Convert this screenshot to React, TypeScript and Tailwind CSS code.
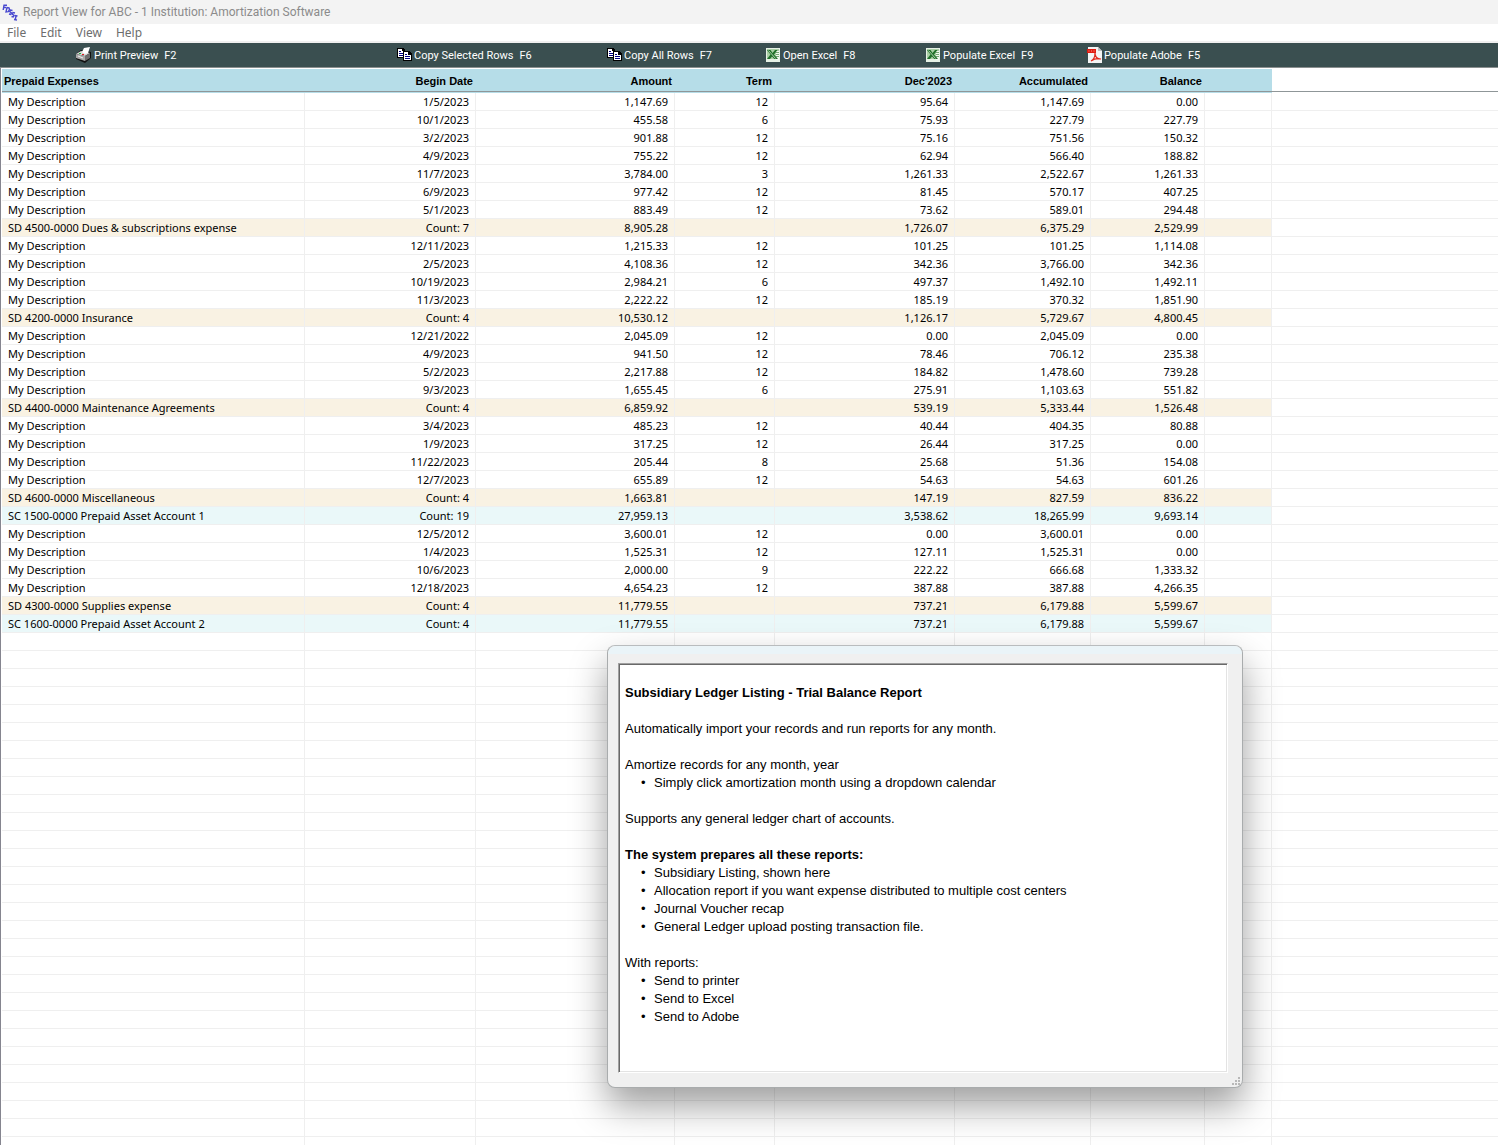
import type { ReactNode } from 'react';

type Row = string[];

const columns = ['Begin Date', 'Amount', 'Term', "Dec'2023", 'Accumulated', 'Balance'];

const rows: Row[] = [
  ['My Description', '1/5/2023', '1,147.69', '12', '95.64', '1,147.69', '0.00'],
  ['My Description', '10/1/2023', '455.58', '6', '75.93', '227.79', '227.79'],
  ['My Description', '3/2/2023', '901.88', '12', '75.16', '751.56', '150.32'],
  ['My Description', '4/9/2023', '755.22', '12', '62.94', '566.40', '188.82'],
  ['My Description', '11/7/2023', '3,784.00', '3', '1,261.33', '2,522.67', '1,261.33'],
  ['My Description', '6/9/2023', '977.42', '12', '81.45', '570.17', '407.25'],
  ['My Description', '5/1/2023', '883.49', '12', '73.62', '589.01', '294.48'],
  ['SD 4500-0000 Dues & subscriptions expense', 'Count: 7', '8,905.28', '', '1,726.07', '6,375.29', '2,529.99'],
  ['My Description', '12/11/2023', '1,215.33', '12', '101.25', '101.25', '1,114.08'],
  ['My Description', '2/5/2023', '4,108.36', '12', '342.36', '3,766.00', '342.36'],
  ['My Description', '10/19/2023', '2,984.21', '6', '497.37', '1,492.10', '1,492.11'],
  ['My Description', '11/3/2023', '2,222.22', '12', '185.19', '370.32', '1,851.90'],
  ['SD 4200-0000 Insurance', 'Count: 4', '10,530.12', '', '1,126.17', '5,729.67', '4,800.45'],
  ['My Description', '12/21/2022', '2,045.09', '12', '0.00', '2,045.09', '0.00'],
  ['My Description', '4/9/2023', '941.50', '12', '78.46', '706.12', '235.38'],
  ['My Description', '5/2/2023', '2,217.88', '12', '184.82', '1,478.60', '739.28'],
  ['My Description', '9/3/2023', '1,655.45', '6', '275.91', '1,103.63', '551.82'],
  ['SD 4400-0000 Maintenance Agreements', 'Count: 4', '6,859.92', '', '539.19', '5,333.44', '1,526.48'],
  ['My Description', '3/4/2023', '485.23', '12', '40.44', '404.35', '80.88'],
  ['My Description', '1/9/2023', '317.25', '12', '26.44', '317.25', '0.00'],
  ['My Description', '11/22/2023', '205.44', '8', '25.68', '51.36', '154.08'],
  ['My Description', '12/7/2023', '655.89', '12', '54.63', '54.63', '601.26'],
  ['SD 4600-0000 Miscellaneous', 'Count: 4', '1,663.81', '', '147.19', '827.59', '836.22'],
  ['SC 1500-0000 Prepaid Asset Account 1', 'Count: 19', '27,959.13', '', '3,538.62', '18,265.99', '9,693.14'],
  ['My Description', '12/5/2012', '3,600.01', '12', '0.00', '3,600.01', '0.00'],
  ['My Description', '1/4/2023', '1,525.31', '12', '127.11', '1,525.31', '0.00'],
  ['My Description', '10/6/2023', '2,000.00', '9', '222.22', '666.68', '1,333.32'],
  ['My Description', '12/18/2023', '4,654.23', '12', '387.88', '387.88', '4,266.35'],
  ['SD 4300-0000 Supplies expense', 'Count: 4', '11,779.55', '', '737.21', '6,179.88', '5,599.67'],
  ['SC 1600-0000 Prepaid Asset Account 2', 'Count: 4', '11,779.55', '', '737.21', '6,179.88', '5,599.67'],
];

// blank grid lines below the data
const emptyRows: Row[] = Array.from({ length: 40 }, () => ['', '', '', '', '', '', '']);

function rowColor(name: string) {
  if (name.startsWith('SD')) return 'bg-[#f9f2e3]';
  if (name.startsWith('SC')) return 'bg-[#eaf8f9]';
  return '';
}

function AppIcon() {
  return (
    <svg width="16" height="17" viewBox="0 0 16 17" fill="none" stroke="#4a4ad0" strokeWidth="1.4" aria-hidden="true">
      <path d="M1.200 6L2 1.200h3M1.500 3.500h2.500" />
      <path d="M4 8l1-4.500 2 .3.500 1.700-1.200 2.200z" />
      <path d="M10.500 6.500L8.500 6l-.8 1.500L9.500 9 8.700 10.500 7 10" />
      <path d="M13 9l-2-.5-.8 1.500 1.800 1.500-.8 1.500-1.700-.5" />
      <path d="M12.500 11.500l3 .5M14 12l-.8 4M12 15.500l3 .5" />
    </svg>
  );
}

function PrinterIcon() {
  return (
    <svg width="16" height="16" viewBox="0 0 16 16" aria-hidden="true">
      <path d="M0 7l5-4 10 2v6l-6 5-9-4z" fill="#111" />
      <path d="M0 7l5-3 9 2-5 3z" fill="#d8d8d8" />
      <path d="M0 7l9 2v5l-9-3z" fill="#a8a8a8" />
      <path d="M9 9l5-3v5l-5 3z" fill="#6e6e6e" />
      <path d="M6 5l2-4 6-1-2 6-3 1z" fill="#fff" />
      <path d="M2 9l5 2" stroke="#eee" />
      <path d="M3 6h2v1H3z" fill="#1fae3a" />
      <path d="M6 7h2v1H6z" fill="#e02020" />
    </svg>
  );
}

function CopyIcon() {
  return (
    <svg width="15" height="14" viewBox="0 0 15 14" shapeRendering="crispEdges" aria-hidden="true">
      <path d="M0 0h6l2 2v8H0z" fill="#000" />
      <path d="M1 1h4v2h2v6H1z" fill="#fff" />
      <path d="M2 3h2v1H2zM2 5h4v1H2zM2 7h4v1H2z" fill="#000080" />
      <path d="M6 3h6l3 3v7H6z" fill="#000" />
      <path d="M7 4h4v3h3v5H7z" fill="#fff" />
      <path d="M8 6h2v1H8zM8 8h5v1H8zM8 10h5v1H8z" fill="#000080" />
    </svg>
  );
}

function ExcelIcon() {
  return (
    <svg width="15" height="14" viewBox="0 0 15 14" aria-hidden="true">
      <path d="M0 0h14v14H0z" fill="#e6f1e5" />
      <path d="M1 1h12v10H1z" fill="#a9cfa5" />
      <path d="M10 3h3v9h-3z" fill="#f3f8f2" />
      <path d="M10 4.500h3M10 6.500h3M10 8.500h3" stroke="#76a974" />
      <path d="M1 2h3.500L6.500 5 9 2h2.500L8 6.500l4 4.500H8.500L6 8.500 4 11H1l3.500-4.500z" fill="#20702a" />
      <path d="M2.500 2.500l7 8" stroke="#cfe8cd" strokeWidth=".8" />
    </svg>
  );
}

function AdobeIcon() {
  return (
    <svg width="15" height="16" viewBox="0 0 15 16" aria-hidden="true">
      <path d="M1 0h10l4 4v12H1z" fill="#f4f4f4" />
      <path d="M11 0v4h4z" fill="#bdbdbd" />
      <path d="M0 2h9v4H0z" fill="#e01b10" />
      <path d="M1.500 4h1M4 4h1M6.500 4h1" stroke="#ff9a8c" />
      <path d="M4 14c2-1 4-4 4-8 0 4 2 6 6 6-4-1-7 0-10 2z" fill="none" stroke="#e0281c" strokeWidth="1.200" />
    </svg>
  );
}

function ToolButton({ icon, label, hotkey, className }: { icon: ReactNode; label: string; hotkey: string; className: string }) {
  return (
    <div className={className}>
      <button type="button" className="flex h-6 items-center gap-0.5 whitespace-nowrap">
        {icon}
        <span className="pt-0.5">{label}</span>
        <span className="pt-0.5 pl-1">{hotkey}</span>
      </button>
    </div>
  );
}

function Bullets({ items }: { items: string[] }) {
  return (
    <ul>
      {items.map((item) => (
        <li key={item} className="flex pl-4">
          <span className="w-[13px]">•</span>
          {item}
        </li>
      ))}
    </ul>
  );
}

function InfoWindow() {
  return (
    <section
      aria-label="Report information"
      className="absolute top-[645px] left-[607px] w-[636px] rounded-lg border border-[#a9acad] border-t-[#b9bcbe] bg-[#f0f0f0] shadow-[0_18px_36px_rgba(0,0,0,0.38)]"
    >
      <div className="h-2 rounded-t-lg bg-[#eaf4f8]" />
      <div className="pt-[9px] pr-3.5 pb-3.5 pl-2.5">
        <div className="h-[410px] border border-t-[#a0a0a0] border-r-white border-b-white border-l-[#a0a0a0] bg-white px-1.5 pt-5 text-[13px] leading-[18px] shadow-[inset_1px_1px_0_#696969,inset_-1px_-1px_0_#e3e3e3]">
          <h2 className="font-bold">Subsidiary Ledger Listing - Trial Balance Report</h2>
          <p className="mt-[18px]">Automatically import your records and run reports for any month.</p>
          <p className="mt-[18px]">Amortize records for any month, year</p>
          <Bullets items={['Simply click amortization month using a dropdown calendar']} />
          <p className="mt-[18px]">Supports any general ledger chart of accounts.</p>
          <h3 className="mt-[18px] font-bold">The system prepares all these reports:</h3>
          <Bullets
            items={[
              'Subsidiary Listing, shown here',
              'Allocation report if you want expense distributed to multiple cost centers',
              'Journal Voucher recap',
              'General Ledger upload posting transaction file.',
            ]}
          />
          <p className="mt-[18px]">With reports:</p>
          <Bullets items={['Send to printer', 'Send to Excel', 'Send to Adobe']} />
        </div>
      </div>
      {/* Resize grip */}
      <svg className="absolute right-0.5 bottom-0.5" width="8" height="8" viewBox="0 0 8 8" fill="#b8b8b8" aria-hidden="true">
        <path d="M6 0h2v2H6zM3 3h2v2H3zM6 3h2v2H6zM0 6h2v2H0zM3 6h2v2H3zM6 6h2v2H6z" />
      </svg>
    </section>
  );
}

export default function App() {
  return (
    <div className="relative flex h-screen flex-col overflow-hidden bg-white font-['Liberation_Sans',Arial,sans-serif] text-black">
      {/* Title bar */}
      <header className="flex h-6 shrink-0 items-center gap-[5px] bg-[#f3f3f3] pl-0.5 font-[Roboto,sans-serif] text-[12px] text-[#8b8b8b]">
        <AppIcon />
        <h1>Report View for ABC - 1 Institution: Amortization Software</h1>
      </header>

      {/* Menu */}
      <nav className="flex h-[19px] shrink-0 items-center gap-3.5 border-b-2 border-[#f0f0f0] pl-[7px] font-['Noto_Sans',sans-serif] text-[12px] text-[#6d6d6d]">
        <button type="button">File</button>
        <button type="button">Edit</button>
        <button type="button">View</button>
        <button type="button">Help</button>
      </nav>

      {/* Toolbar */}
      <div className="flex h-[25px] shrink-0 border-b border-[#8a8f8f] bg-[#3a4f50] pl-[76px] font-[Roboto,sans-serif] text-[11px] text-white">
        <ToolButton className="w-[321px]" icon={<PrinterIcon />} label="Print Preview" hotkey="F2" />
        <ToolButton className="w-[210px]" icon={<CopyIcon />} label="Copy Selected Rows" hotkey="F6" />
        <ToolButton className="w-[159px]" icon={<CopyIcon />} label="Copy All Rows" hotkey="F7" />
        <ToolButton className="w-[160px]" icon={<ExcelIcon />} label="Open Excel" hotkey="F8" />
        <ToolButton className="w-[161px]" icon={<ExcelIcon />} label="Populate Excel" hotkey="F9" />
        <ToolButton className="w-[120px]" icon={<AdobeIcon />} label="Populate Adobe" hotkey="F5" />
      </div>

      {/* Report grid */}
      <main className="min-h-0 flex-1 overflow-hidden border-l border-[#85858f] pt-px pl-px">
        <table className="w-full table-fixed border-separate border-spacing-0 text-[11px] leading-[17px]">
          <colgroup>
            <col className="w-[303px]" />
            <col className="w-[171px]" />
            <col className="w-[199px]" />
            <col className="w-[100px]" />
            <col className="w-[180px]" />
            <col className="w-[136px]" />
            <col className="w-[114px]" />
            <col className="w-[67px]" />
            <col />
          </colgroup>
          <thead>
            <tr className="h-6 text-right">
              <th className="border-b border-[#b6dde8] bg-[#b6dde8] p-0 pt-0.5 pl-0.5 text-left shadow-[inset_0_-1px_0_#8f9698]">Prepaid Expenses</th>
              {columns.map((name) => (
                <th key={name} className="border-b border-[#b6dde8] bg-[#b6dde8] p-0 pt-0.5 pr-[3px] shadow-[inset_0_-1px_0_#8f9698]">{name}</th>
              ))}
              <td className="border-b border-[#b6dde8] bg-[#b6dde8] p-0 shadow-[inset_0_-1px_0_#8f9698]" />
              <td className="border-b border-white p-0 shadow-[inset_0_-1px_0_#8f9698]" />
            </tr>
          </thead>
          <tbody className="font-['Noto_Sans',sans-serif]">
            {[...rows, ...emptyRows].map((row, i) => (
              <tr key={i} className="h-[18px] text-right">
                {row.map((cell, j) => (
                  <td
                    key={j}
                    className={`border-r border-b border-[#efefef] p-0 whitespace-nowrap ${j === 0 ? 'pl-1.5 text-left' : 'pr-1.5'} ${rowColor(row[0])}`}
                  >
                    {cell}
                  </td>
                ))}
                <td className={`border-r border-b border-[#efefef] p-0 ${rowColor(row[0])}`} />
                <td className="border-b border-[#efefef] p-0" />
              </tr>
            ))}
          </tbody>
        </table>
      </main>

      <InfoWindow />
    </div>
  );
}
